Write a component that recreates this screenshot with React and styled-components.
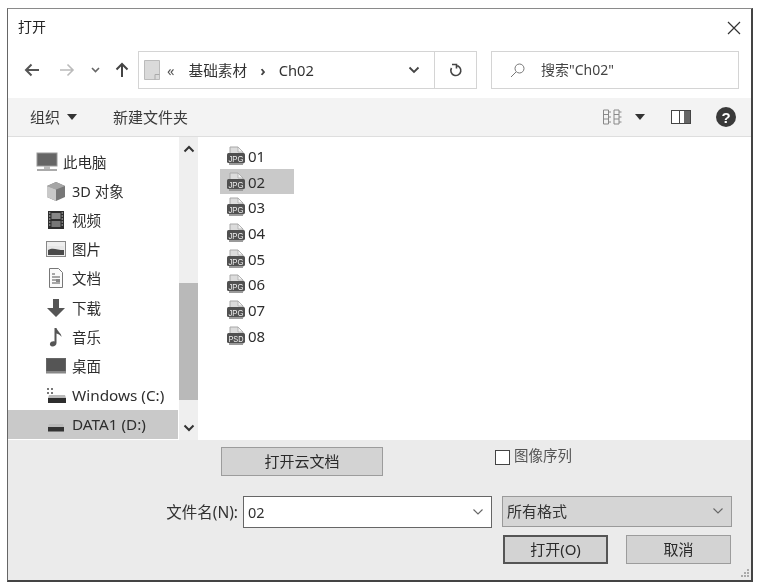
import React from 'react';
import styled, { createGlobalStyle } from 'styled-components';

const FONT = '"Noto Sans", "Noto Sans CJK SC", sans-serif';

const Global = createGlobalStyle`
  html, body { margin: 0; padding: 0; background: #fff; }
  body { width: 761px; height: 587px; overflow: hidden; font-family: ${FONT}; color: #2c2c2c; }
`;

const Page = styled.div`
  width: 761px; height: 587px; box-sizing: border-box;
  padding: 8px 8px 5px 7px;
  filter: blur(0.45px);
`;
const Dialog = styled.div`
  position: relative;
  width: 746px; height: 574px; box-sizing: border-box;
  display: flex; flex-direction: column;
  border-top: 1px solid #8a8a8a; border-left: 1px solid #666;
  border-right: 2px solid #444; border-bottom: 2px solid #444;
  background: #fff; font-size: 15px; line-height: 20px;
`;
const TitleBar = styled.div`
  height: 36px; flex: none; display: flex; align-items: center; justify-content: space-between;
  padding: 0 10px; font-size: 14px; color: #222;
`;
const CloseButton = styled.span`display: flex; width: 14px; height: 14px; margin-top: 1px;`;
const NavRow = styled.div`
  height: 53px; flex: none; box-sizing: border-box; display: flex; align-items: flex-start; padding-top: 6px;
`;
const NavIcons = styled.div`
  width: 130px; height: 37px; flex: none; display: flex; align-items: center; box-sizing: border-box; padding-left: 16px;
`;
const NavIcon = styled.span`display: flex; margin-right: ${p => p.$gap}px; color: ${p => p.$c};`;
const AddressBar = styled.div`
  width: 339px; height: 38px; flex: none; box-sizing: border-box; display: flex; align-items: center;
  border: 1px solid #d4d4d4; background: #fff;
`;
const Crumbs = styled.div`
  flex: 1; display: flex; align-items: center; font-size: 14.7px; color: #333; padding-left: 5px; height: 100%;
`;
const Crumb = styled.span`margin-left: ${p => p.$ml || 0}px; color: ${p => p.$c || 'inherit'}; font-weight: ${p => p.$w || 400};`;
const AddressMenu = styled.div`
  width: 42px; display: flex; justify-content: center; align-items: center; height: 100%; box-sizing: border-box; padding-left: 2px;
`;
const Refresh = styled.div`
  width: 41px; height: 100%; display: flex; justify-content: center; align-items: center; border-left: 1px solid #d4d4d4;
`;
const SearchBox = styled.div`
  width: 248px; height: 38px; flex: none; margin-left: 14px; box-sizing: border-box; display: flex; align-items: center;
  border: 1px solid #d4d4d4; padding-left: 18px; font-size: 14px; color: #444;
`;
const SearchText = styled.span`margin-left: 16px;`;
const Toolbar = styled.div`
  height: 39px; flex: none; box-sizing: border-box; display: flex; align-items: center; justify-content: space-between;
  background: #f3f3f3; border-bottom: 1px solid #dedede; padding: 0 15px 0 22px; font-size: 15px; color: #3a3a3a;
`;
const ToolGroup = styled.div`display: flex; align-items: center;`;
const ToolItem = styled.span`display: flex; align-items: center; margin-left: ${p => p.$ml || 0}px;`;
const CaretSlot = styled.span`display: flex; margin-left: 7px;`;
const Main = styled.div`height: 303px; flex: none; display: flex;`;
const Sidebar = styled.div`width: 170px; flex: none; display: flex; flex-direction: column; padding-top: 10px; box-sizing: border-box;`;
const NavItem = styled.div`
  height: 29.2px; flex: none; display: flex; align-items: center; box-sizing: border-box;
  padding-left: ${p => p.$root ? 28 : 38}px;
  background: ${p => p.$sel ? '#c9c9c9' : 'transparent'};
  font-size: ${p => p.$latin ? 15.3 : 14.5}px; color: #2e2e2e;
`;
const NavGlyph = styled.span`
  width: ${p => p.$root ? 22 : 20}px; height: 20px; display: flex; align-items: center; justify-content: center; margin-right: ${p => p.$root ? 5 : 6}px; flex: none;
`;
const Scrollbar = styled.div`
  width: 19px; flex: none; display: flex; flex-direction: column; background: #efefef; margin: 0 3px 0 1px;
`;
const ScrollEnd = styled.div`height: ${p => p.$h}px; flex: none; display: flex; justify-content: center; align-items: center;`;
const ScrollTrack = styled.div`flex: 1; display: flex; flex-direction: column;`;
const Thumb = styled.div`height: 117px; margin-top: ${p => p.$top}px; background: #b9b9b9;`;
const Files = styled.div`flex: 1; display: flex; flex-direction: column; align-items: flex-start; padding: 6px 0 0 19px; background: #fff;`;
const FileRow = styled.div`
  width: 74px; height: 25.7px; box-sizing: border-box; display: flex; align-items: center; padding-left: 6px;
  background: ${p => p.$sel ? '#c9c9c9' : 'transparent'};
  font-size: 15px; color: #2e2e2e;
`;
const FileIconWrap = styled.span`display: flex; margin-right: 2px;`;
const Bottom = styled.div`flex: 1; background: #ebebeb; display: flex; flex-direction: column;`;
const TopActions = styled.div`display: flex; align-items: flex-start; height: 56px; flex: none; box-sizing: border-box; padding: 7px 0 0 213px;`;
const FieldsRow = styled.div`display: flex; align-items: flex-start; height: 39px; flex: none;`;
const ButtonsRow = styled.div`display: flex; align-items: center; height: 29px; flex: none; padding-left: 495px;`;
const FlatButton = styled.div`
  width: ${p => p.$w}px; height: 29px; box-sizing: border-box; flex: none; display: flex; align-items: center; justify-content: center;
  background: #d3d3d3; border: ${p => p.$primary ? '2px solid #555' : '1px solid #9c9c9c'}; padding-bottom: 2px;
  margin-left: ${p => p.$ml || 0}px; font-size: 15px; color: #2a2a2a;
`;
const CheckWrap = styled.label`display: flex; align-items: flex-start; margin-left: 112px; color: #555; font-size: 14.5px; line-height: 16px;`;
const CheckBox = styled.span`width: 15px; height: 15px; box-sizing: border-box; border: 1px solid #444; background: #fff; margin: 3px 4px 0 0;`;
const FieldLabel = styled.span`width: 235px; line-height: 32px; text-align: right; padding-right: 5px; box-sizing: border-box; font-size: 15.5px; color: #333;`;
const TextField = styled.div`
  width: 249px; height: 32px; box-sizing: border-box; display: flex; align-items: center; justify-content: space-between;
  background: #fff; border: 1px solid #666; padding: 0 7px 0 4px; font-size: 14.5px; color: #333;
`;
const SelectField = styled.div`
  width: 230px; height: 31px; margin-left: 10px; box-sizing: border-box; display: flex; align-items: center; justify-content: space-between;
  background: #d5d5d5; border: 1px solid #9a9a9a; padding: 0 7px 2px 4px; font-size: 15px; color: #333;
`;
const Grip = styled.span`position: absolute; right: 1px; bottom: 1px; display: flex;`;

const Chevron = ({ c = '#555', w = 1.3, up }) => (
  <svg width="12" height="8" viewBox="0 0 12 8"><path d={up ? 'M1.5 6.5 6 2l4.500 4.500' : 'M1.5 1.5 6 6l4.500-4.500'} fill="none" stroke={c} strokeWidth={w} /></svg>
);
const Caret = () => <svg width="10" height="6" viewBox="0 0 10 6"><path d="M0 0h10L5 6z" fill="#333" /></svg>;
const FileIcon = ({ label }) => (
  <svg width="20" height="20" viewBox="0 0 20 20">
    <path d="M4 1h8l5 5v12H4z" fill="#dcdcdc" stroke="#a8a8a8" />
    <path d="M12 1v5h5z" fill="#f2f2f2" stroke="#a8a8a8" strokeWidth=".7" />
    <rect x="1" y="7" width="18" height="10" rx="1.5" fill="#505050" />
    <text x="10" y="15.500" textAnchor="middle" fontSize="8.500" fontFamily="Liberation Sans" fill="#eee" textLength="15" lengthAdjust="spacingAndGlyphs">{label}</text>
    <rect x="3" y="17" width="14" height="2" fill="#9a9a9a" />
  </svg>
);
const icons = {
  pc: <svg width="22" height="20" viewBox="0 0 22 20"><rect x="1" y="1" width="20" height="13" fill="#666" stroke="#999" /><rect x="8" y="14" width="6" height="3" fill="#bbb" /><rect x="1" y="17" width="20" height="2" fill="#aaa" /></svg>,
  cube: <svg width="20" height="20" viewBox="0 0 20 20"><path d="M1 5l9-4 9 4v11l-9 4-9-4z" fill="#777" /><path d="M1 5l9 3.500L19 5l-9-4z" fill="#a5a5a5" /><path d="M1 5l9 3.500V20l-9-4z" fill="#c9c9c9" /></svg>,
  film: <svg width="18" height="20" viewBox="0 0 18 20"><rect x="1" y="1" width="16" height="18" fill="#2e2e2e" /><rect x="4.500" y="3" width="9" height="6" fill="#888" /><rect x="4.500" y="11" width="9" height="6" fill="#777" /><path d="M2 3h1.400M2 6h1.400M2 9h1.400M2 12h1.400M2 15h1.400M14.600 3H16M14.600 6H16M14.600 9H16M14.600 12H16M14.600 15H16" stroke="#ccc" /></svg>,
  pic: <svg width="20" height="16" viewBox="0 0 20 16"><rect x=".5" y=".5" width="19" height="15" fill="#eee" stroke="#888" /><path d="M2 5h16v9H2z" fill="#e6e6e6" /><path d="M2 9c5-3 9 0 16 0v5H2z" fill="#4a4a4a" /></svg>,
  doc: <svg width="16" height="20" viewBox="0 0 16 20"><path d="M1.500.5h9l4 4v15h-13z" fill="#fbfbfb" stroke="#777" /><path d="M4 6h3M4 9h8M4 12h8M4 15h8" stroke="#555" /><rect x="8" y="11" width="4" height="3" fill="#888" /></svg>,
  down: <svg width="20" height="20" viewBox="0 0 20 20"><path d="M7 1h6v9h6l-9 9-9-9h6z" fill="#555" /></svg>,
  music: <svg width="14" height="20" viewBox="0 0 14 20"><path d="M5.500 1h2c.5 3 5 5 5 9-1-2-3-3-5-3.500V16c0 2-2 3.500-4 3.500S.5 18 1 16.500 3.500 14 5.500 14.500z" fill="#555" /></svg>,
  desk: <svg width="20" height="16" viewBox="0 0 20 16"><rect x=".5" y=".5" width="19" height="13" fill="#555" stroke="#666" /><rect y="13" width="20" height="2.500" fill="#888" /></svg>,
  c: <svg width="20" height="18" viewBox="0 0 20 18"><path d="M1 2h2v2H1zM5 2h2v2H5zM1 6h2v2H1zM5 6h2v2H5z" fill="#777" /><path d="M3 9h16l1 3H2z" fill="#bbb" /><rect x="2" y="12" width="18" height="5" fill="#2e2e2e" /></svg>,
  d: <svg width="20" height="18" viewBox="0 0 20 18"><path d="M3 9h14l1 3H2z" fill="#bbb" /><rect x="2" y="12" width="16" height="4.500" fill="#333" /></svg>,
};
const navItems = [
  { k: 'pc', t: '此电脑', root: true },
  { k: 'cube', t: '3D 对象' },
  { k: 'film', t: '视频' },
  { k: 'pic', t: '图片' },
  { k: 'doc', t: '文档' },
  { k: 'down', t: '下载' },
  { k: 'music', t: '音乐' },
  { k: 'desk', t: '桌面' },
  { k: 'c', t: 'Windows (C:)', latin: true },
  { k: 'd', t: 'DATA1 (D:)', latin: true, sel: true },
];
const files = [['01', 'JPG'], ['02', 'JPG', true], ['03', 'JPG'], ['04', 'JPG'], ['05', 'JPG'], ['06', 'JPG'], ['07', 'JPG'], ['08', 'PSD']];

export default function App() {
  return (
    <Page>
      <Global />
      <Dialog>
        <TitleBar>
          <span>打开</span>
          <CloseButton><svg width="14" height="14" viewBox="0 0 14 14"><path d="M1 1l12 12M13 1 1 13" stroke="#333" strokeWidth="1.200" /></svg></CloseButton>
        </TitleBar>
        <NavRow>
          <NavIcons>
            <NavIcon $gap={21} $c="#555"><svg width="15" height="14" viewBox="0 0 15 14"><path d="M15 7H2M7.500 1.500 2 7l5.500 5.500" fill="none" stroke="currentColor" strokeWidth="2" /></svg></NavIcon>
            <NavIcon $gap={16} $c="#bbb"><svg width="15" height="14" viewBox="0 0 15 14"><path d="M0 7h13M7.500 1.500 13 7l-5.500 5.500" fill="none" stroke="currentColor" strokeWidth="1.600" /></svg></NavIcon>
            <NavIcon $gap={15} $c="#666"><svg width="9" height="6" viewBox="0 0 9 6"><path d="M1 1l3.500 3.500L8 1" fill="none" stroke="currentColor" strokeWidth="1.600" /></svg></NavIcon>
            <NavIcon $gap={0} $c="#444"><svg width="14" height="15" viewBox="0 0 14 15"><path d="M7 15V2M1.500 7.500 7 2l5.500 5.500" fill="none" stroke="currentColor" strokeWidth="2" /></svg></NavIcon>
          </NavIcons>
          <AddressBar>
            <Crumbs>
              <svg width="16" height="20" viewBox="0 0 16 20"><path d="M.5.5h15v19H.5z" fill="#dadada" stroke="#bbb" /><path d="M11 19.500v-5h4.500" fill="none" stroke="#aaa" /></svg>
              <Crumb $ml={7} $c="#555">«</Crumb>
              <Crumb $ml={14}>基础素材</Crumb>
              <Crumb $ml={13} $c="#444" $w={700}>›</Crumb>
              <Crumb $ml={13}>Ch02</Crumb>
            </Crumbs>
            <AddressMenu><Chevron c="#444" w={1.800} /></AddressMenu>
            <Refresh><svg width="14" height="15" viewBox="0 0 14 15"><path d="M3 1.500h4.500v4M7 2.500a5 5 0 1 1-4.500 2.500" fill="none" stroke="#444" strokeWidth="1.600" /></svg></Refresh>
          </AddressBar>
          <SearchBox>
            <svg width="15" height="15" viewBox="0 0 15 15"><circle cx="9.500" cy="5.500" r="4.500" fill="none" stroke="#777" /><path d="M6 9l-5 5" stroke="#777" /></svg>
            <SearchText>搜索"Ch02"</SearchText>
          </SearchBox>
        </NavRow>
        <Toolbar>
          <ToolGroup>
            <ToolItem>组织<CaretSlot><Caret /></CaretSlot></ToolItem>
            <ToolItem $ml={36}>新建文件夹</ToolItem>
          </ToolGroup>
          <ToolGroup>
            <ToolItem>
              <svg width="21" height="16" viewBox="0 0 21 16"><path d="M.5 1h5v14h-5zM.5 5.500h5M.5 10h5M11 1h5v14h-5zM11 5.500h5M11 10h5M6 3h2M6 8h2M6 13h2M16 3h2.500M16 8h2.500M16 13h2.500" fill="none" stroke="#888" /></svg>
            </ToolItem>
            <ToolItem $ml={11}><Caret /></ToolItem>
            <ToolItem $ml={26}>
              <svg width="20" height="14" viewBox="0 0 20 14"><rect x=".5" y=".5" width="19" height="13" fill="#fff" stroke="#444" /><rect x="8" y="1" width="1" height="12" fill="#444" /><rect x="13" y="1" width="6" height="12" fill="#666" /></svg>
            </ToolItem>
            <ToolItem $ml={25}>
              <svg width="20" height="20" viewBox="0 0 20 20"><circle cx="10" cy="10" r="10" fill="#3a3a3a" /><text x="10" y="15.500" textAnchor="middle" fontSize="15" fontWeight="700" fontFamily="Liberation Sans" fill="#fff">?</text></svg>
            </ToolItem>
          </ToolGroup>
        </Toolbar>
        <Main>
          <Sidebar>
            {navItems.map(({ k, t, root, sel, latin }) => (
              <NavItem key={t} $root={root} $sel={sel} $latin={latin}>
                <NavGlyph $root={root}>{icons[k]}</NavGlyph>
                <span>{t}</span>
              </NavItem>
            ))}
          </Sidebar>
          <Scrollbar>
            <ScrollEnd $h={24}><Chevron c="#333" w={2} up /></ScrollEnd>
            <ScrollTrack><Thumb $top={122} /></ScrollTrack>
            <ScrollEnd $h={24}><Chevron c="#333" w={2} /></ScrollEnd>
          </Scrollbar>
          <Files>
            {files.map(([n, l, s]) => (
              <FileRow key={n} $sel={s}>
                <FileIconWrap><FileIcon label={l} /></FileIconWrap>
                <span>{n}</span>
              </FileRow>
            ))}
          </Files>
        </Main>
        <Bottom>
          <TopActions>
            <FlatButton $w={162}>打开云文档</FlatButton>
            <CheckWrap><CheckBox />图像序列</CheckWrap>
          </TopActions>
          <FieldsRow>
            <FieldLabel>文件名(N):</FieldLabel>
            <TextField><span>02</span><Chevron c="#666" w={1.100} /></TextField>
            <SelectField><span>所有格式</span><Chevron c="#666" w={1.100} /></SelectField>
          </FieldsRow>
          <ButtonsRow>
            <FlatButton $w={105} $primary>打开(O)</FlatButton>
            <FlatButton $w={105} $ml={18}>取消</FlatButton>
          </ButtonsRow>
        </Bottom>
        <Grip>
          <svg width="11" height="11" viewBox="0 0 11 11"><path d="M8 1h2v2H8zM5 4h2v2H5zM8 4h2v2H8zM2 7h2v2H2zM5 7h2v2H5zM8 7h2v2H8z" fill="#aaa" /></svg>
        </Grip>
      </Dialog>
    </Page>
  );
}
